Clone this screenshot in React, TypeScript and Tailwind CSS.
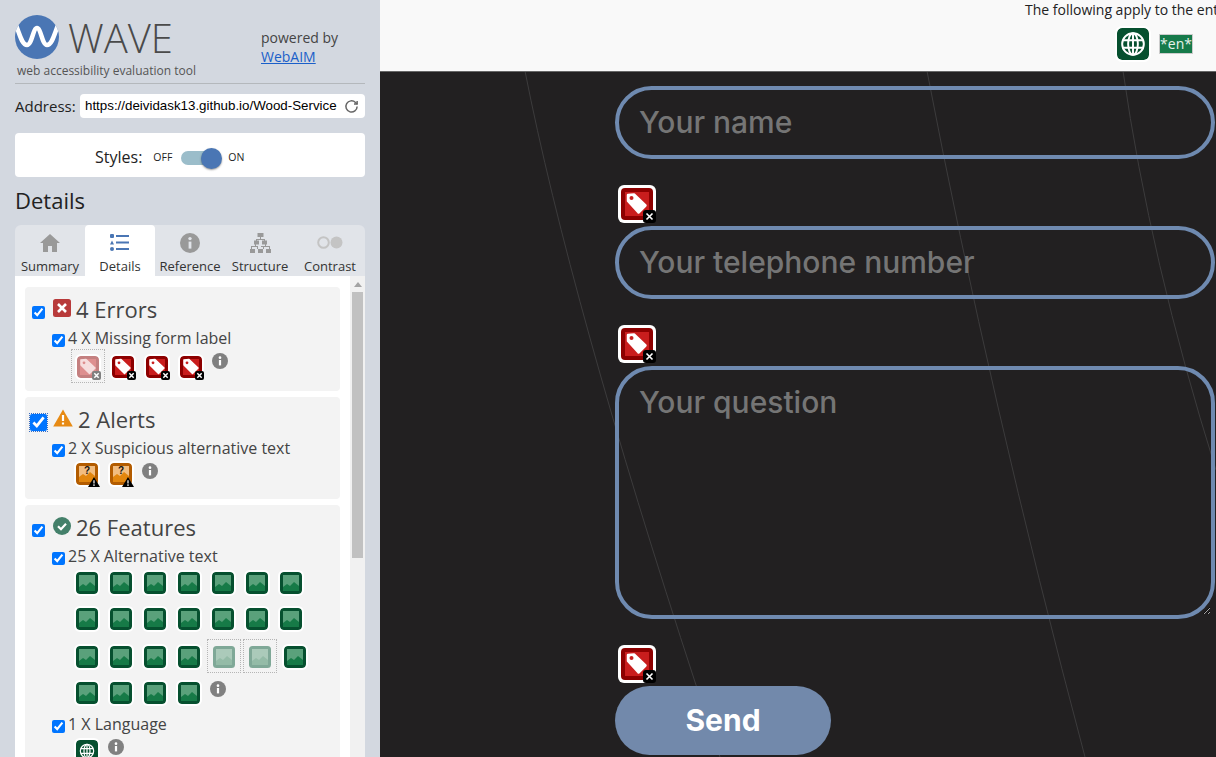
import React from "react";

const Badge = ({ faded }: { faded?: boolean }) => (
  <span className={`absolute flex items-center justify-center rounded-[2px] ${faded ? "bg-[#808080]" : "bg-black"}`} style={{ right: "-2px", bottom: "-2px", width: "9px", height: "9px" }}>
    <svg width="7" height="7" viewBox="0 0 8 8"><path d="M1.5 1.5l5 5M6.5 1.5l-5 5" stroke="#fff" strokeWidth="1.7" /></svg>
  </span>
);

const TagIcon = ({ big, faded }: { big?: boolean; faded?: boolean }) => {
  if (big) {
    return (
      <span className="relative block w-[38px] h-[38px] shrink-0 rounded-[6px] bg-white p-[3px]">
        <svg width="32" height="32" viewBox="0 0 32 32" className="block">
          <rect width="32" height="32" rx="4" fill="#8d0000" />
          <rect x="4" y="4" width="24" height="24" fill="#c91d1d" />
          <path d="M7 7 L13 6.5 L24.5 17.5 L17.5 24.5 L7 13 Z" fill="#fff" strokeLinejoin="round" stroke="#fff" strokeWidth="2.5" />
          <circle cx="10.5" cy="10" r="2" fill="#c91d1d" />
        </svg>
        <span className="absolute right-0 bottom-0 w-[13px] h-[13px] bg-black rounded-[3px] flex items-center justify-center">
          <svg width="9" height="9" viewBox="0 0 9 9"><path d="M1.5 1.5l6 6M7.5 1.5l-6 6" stroke="#fff" strokeWidth="1.6" /></svg>
        </span>
      </span>
    );
  }
  return (
    <span className="relative block w-[22px] h-[22px] shrink-0 rounded-[4px] outline-2 outline-white">
      <svg width="22" height="22" viewBox="0 0 22 22" className="block">
        <rect width="22" height="22" rx="3.5" fill={faded ? "#c48080" : "#8d0000"} />
        <rect x="3" y="3" width="16" height="16" fill={faded ? "#de8f8f" : "#c91d1d"} />
        <path d="M4 4 L9 3.5 L18 12 L12.5 17.5 L4 9 Z" fill={faded ? "#f6dede" : "#fff"} stroke={faded ? "#f6dede" : "#fff"} strokeWidth="1.5" strokeLinejoin="round" />
        <circle cx="7" cy="6.8" r="1.4" fill={faded ? "#de8f8f" : "#c91d1d"} />
      </svg>
      <Badge faded={faded} />
    </span>
  );
};

const QIcon = () => (
  <span className="relative block w-[22px] h-[22px] mx-[6px] shrink-0 rounded-[4px] outline-2 outline-white">
    <svg width="22" height="22" viewBox="0 0 22 22" className="block">
      <rect width="22" height="22" rx="3.5" fill="#b35c00" />
      <rect x="3" y="3" width="16" height="16" fill="#f2bd80" />
      <path d="M3 19 V14 L7 11 L10 13 L14 9 L19 13 V19 Z" fill="#e2860e" />
      <text x="11" y="11" textAnchor="middle" fontSize="10" fontWeight="700" fontFamily="Liberation Sans" fill="#111">?</text>
    </svg>
    <svg width="12" height="10" viewBox="0 0 12 10" className="absolute" style={{ right: "-2px", bottom: "-2px" }}>
      <path d="M6 0 L12 10 H0 Z" fill="#000" />
      <path d="M6 3.2v3.4M6 7.3v1.6" stroke="#fff" strokeWidth="1.2" />
    </svg>
  </span>
);

const ImgIcon = ({ faded }: { faded?: boolean }) => (
  <span className={`block w-[22px] h-[22px] shrink-0 rounded-[4px] ${faded ? "" : "outline-2 outline-white"}`}>
    <svg width="22" height="22" viewBox="0 0 22 22" className="block">
      <rect width="22" height="22" rx="3.5" fill={faded ? "#7fa897" : "#06502f"} />
      <rect x="3" y="3" width="16" height="16" fill={faded ? "#abcaba" : "#5aa17b"} />
      <path d="M3 19 V15 L7 12 L10 14 L14 10 L19 14 V19 Z" fill={faded ? "#94bba7" : "#167a47"} />
    </svg>
  </span>
);

const Globe = ({ size, color }: { size: number; color: string }) => (
  <svg width={size} height={size} viewBox="0 0 24 24" fill="none" stroke={color} strokeWidth="1.8" className="block">
    <circle cx="12" cy="12" r="10" />
    <ellipse cx="12" cy="12" rx="4.5" ry="10" />
    <path d="M12 2v20M2.8 8.5h18.4M2.8 15.5h18.4" />
  </svg>
);

const Info = ({ cls }: { cls: string }) => (
  <svg width="16" height="16" viewBox="0 0 16 16" className={`block shrink-0 ${cls}`}>
    <circle cx="8" cy="8" r="8" fill="#808080" />
    <rect x="6.9" y="7" width="2.2" height="5.4" fill="#fff" />
    <circle cx="8" cy="4.7" r="1.35" fill="#fff" />
  </svg>
);

const Tab = ({ label, active, children }: { label: string; active?: boolean; children: React.ReactNode }) => (
  <div className={`w-[70px] h-[51px] flex flex-col items-center ${active ? "bg-white rounded-t-[4px]" : ""}`}>
    <div className="h-[34px] flex items-center justify-center pt-[1px] w-full">{children}</div>
    <div className="text-[13px] leading-[14px] text-[#333] whitespace-nowrap">{label}</div>
  </div>
);

const Check = ({ cls }: { cls: string }) => <input type="checkbox" defaultChecked className={`block shrink-0 m-0 ${cls}`} />;

const Field = ({ placeholder }: { placeholder: string }) => (
  <input
    placeholder={placeholder}
    className="block w-[600px] h-[73px] shrink-0 rounded-[37px] border-4 border-[#6f8ab0] bg-transparent pl-[20px] pr-5 pb-[2px] text-[30px] font-medium outline-none placeholder:text-[#757575]"
  />
);

const Row = ({ children, cls }: { children: React.ReactNode; cls: string }) => <div className={`flex items-start ml-[45px] ${cls}`}>{children}</div>;

const Cell = ({ children }: { children: React.ReactNode }) => <span className="block mx-[6px]">{children}</span>;

const Dotted = ({ children }: { children: React.ReactNode }) => (
  <span className="block w-[34px] h-[34px] pt-[6px] px-[5px] border border-dotted border-[#b5b5b5] mr-[2px] shrink-0">{children}</span>
);

const imgs = (n: number) => Array.from({ length: n }, (_, i) => <Cell key={i}><ImgIcon /></Cell>);

const SmallImg = () => <span className="block mx-[6px] mt-[7px]"><ImgIcon /></span>;

export default function App() {
  return (
    <div className="flex w-[1216px] h-[757px] overflow-hidden bg-[#222021] text-[#333]" style={{ fontFamily: '"Open Sans", sans-serif' }}>
      <aside className="w-[380px] h-[757px] shrink-0 bg-[#d3d8e0] px-[15px] pt-[15px] overflow-hidden">
        <div className="flex items-start h-[69px] border-b border-[#b4b8bc]">
          <div className="w-[246px] shrink-0">
            <div className="flex items-center h-[44px]">
              <svg width="44" height="44" viewBox="0 0 44 44" className="block shrink-0">
                <defs><clipPath id="c"><circle cx="22" cy="22" r="22" /></clipPath></defs>
                <circle cx="22" cy="22" r="22" fill="#4a76b4" />
                <path clipPath="url(#c)" d="M1 10 C5 20 7 30 12 30 C17 30 18 13 22 13 C26 13 27 30 32 30 C37 30 39 20 43 10" fill="none" stroke="#fff" strokeWidth="4.5" />
              </svg>
              <span className="ml-[9px] mt-[2px] text-[40px] leading-[44px] font-light text-[#4a4a4a]">WAVE</span>
            </div>
            <div className="ml-[2px] mt-[4px] text-[12px] leading-[16px] text-[#555] whitespace-nowrap">web accessibility evaluation tool</div>
          </div>
          <div className="pt-[13px] text-[14px] leading-[19px] text-[#444]">
            <div>powered by</div>
            <a className="underline text-[#1a5fc9]">WebAIM</a>
          </div>
        </div>

        <div className="flex items-center mt-[10px] h-[24px]">
          <span className="w-[65px] shrink-0 text-[15px] text-[#222]">Address:</span>
          <div className="flex items-center justify-between w-[285px] h-[24px] bg-white rounded-[4px] pl-[5px] pr-[6px]">
            <span className="text-[13.33px] text-black whitespace-nowrap" style={{ fontFamily: '"Liberation Sans", sans-serif' }}>https://deividask13.github.io/Wood-Service</span>
            <svg width="15" height="15" viewBox="0 0 24 24" fill="none" stroke="#666" strokeWidth="2.4" className="block shrink-0">
              <path d="M21 12a9 9 0 1 1-2.6-6.4L21 8" />
              <path d="M21 3v5h-5" />
            </svg>
          </div>
        </div>

        <div className="flex items-center mt-[15px] h-[44px] bg-white rounded-[4px] pl-[80px] pt-[4px]">
          <span className="text-[16px] text-[#222]">Styles:</span>
          <span className="ml-[11px] mt-[2px] text-[10.5px] text-[#222]">OFF</span>
          <span className="relative block ml-[9px] mt-[2px] w-[32px] h-[14px] rounded-[7px] bg-[#9bbdca]">
            <span className="absolute block right-[-9px] top-[-3px] w-[21px] h-[21px] rounded-full bg-[#4a76b4] shadow-[0_1px_2px_rgba(0,0,0,0.4)]" />
          </span>
          <span className="ml-[15px] mt-[2px] text-[10.5px] text-[#222]">ON</span>
        </div>

        <h2 className="mt-[8px] text-[22px] leading-[30px] text-[#222]">Details</h2>

        <div className="flex mt-[10px] bg-[#e1e4e9] rounded-t-[6px] w-[350px]">
          <Tab label="Summary">
            <svg width="20" height="18" viewBox="0 0 20 18"><path d="M10 0 L20 9 H17 V18 H12 V12 H8 V18 H3 V9 H0 Z" fill="#999" /></svg>
          </Tab>
          <Tab label="Details" active>
            <svg width="20" height="17" viewBox="0 0 20 17" fill="#4a76b4">
              <rect x="0" y="0" width="4" height="4" rx="1" /><rect x="6" y="1" width="13" height="2" />
              <path d="M2 6.5 L4 10.5 H0 Z" /><rect x="6" y="7.5" width="13" height="2" />
              <circle cx="2" cy="15" r="2" /><rect x="6" y="14" width="13" height="2" />
            </svg>
          </Tab>
          <Tab label="Reference">
            <svg width="20" height="20" viewBox="0 0 20 20"><circle cx="10" cy="10" r="10" fill="#999" /><rect x="8.6" y="8.6" width="2.8" height="7" fill="#e1e4e9" /><circle cx="10" cy="5.6" r="1.7" fill="#e1e4e9" /></svg>
          </Tab>
          <Tab label="Structure">
            <svg width="21" height="20" viewBox="0 0 21 20" fill="#999" stroke="none">
              <rect x="7.5" y="0" width="6" height="4" /><rect x="4" y="7.5" width="5" height="4" /><rect x="12" y="7.5" width="5" height="4" />
              <rect x="0" y="16" width="5" height="4" /><rect x="8" y="16" width="5" height="4" /><rect x="16" y="16" width="5" height="4" />
              <path d="M10 4v2h-4v2h1v-1h7v1h1V6h-4V4z M2 14h5v2h1v-3H6v-2H5v2H1v3h1z M11 13h4v-2h1v2h4v3h-1v-2h-5v2h-1v-2h-2z" />
            </svg>
          </Tab>
          <Tab label="Contrast">
            <svg width="26" height="13" viewBox="0 0 26 13"><circle cx="6.5" cy="6.5" r="5.3" fill="none" stroke="#c4c4c4" strokeWidth="2" /><circle cx="19.5" cy="6.5" r="6" fill="#c4c4c4" /></svg>
          </Tab>
        </div>

        <div className="flex w-[350px] h-[500px] bg-white">
          <div className="w-[335px] shrink-0 pl-[10px] pr-[10px] pt-[11px]">
            <section className="relative h-[104px] w-[315px] bg-[#f3f3f3] rounded-[4px] pt-[13px]">
              <div className="flex items-start">
                <Check cls="ml-[7px] mt-[6px] w-[13px] h-[13px]" />
                <svg width="18" height="18" viewBox="0 0 18 18" className="block ml-[8px] mt-[-1px] shrink-0"><rect width="18" height="18" rx="2.5" fill="#b83a3a" /><path d="M5 5l8 8M13 5l-8 8" stroke="#fff" strokeWidth="2.6" /></svg>
                <span className="ml-[5px] text-[22px] leading-[20px] text-[#444] whitespace-nowrap mt-[-1px]">4 Errors</span>
              </div>
              <div className="flex items-start mt-[9px] h-[20px]">
                <Check cls="ml-[27px] mt-[6px] w-[13px] h-[13px]" />
                <span className="ml-[3px] text-[16px] leading-[20px] text-[#444] whitespace-nowrap">4 X Missing form label</span>
              </div>
              <div className="flex items-start ml-[46px] mt-[1px]">
                <span className="block w-[34px] h-[34px] pt-[6px] pl-[5px] pr-[5px] border border-dotted border-[#b5b5b5] shrink-0"><TagIcon faded /></span>
                <span className="block ml-[7px] mt-[7px]"><TagIcon /></span>
                <span className="block ml-[12px] mt-[7px]"><TagIcon /></span>
                <span className="block ml-[12px] mt-[7px]"><TagIcon /></span>
                <Info cls="ml-[10px] mt-[4px]" />
              </div>
            </section>

            <section className="relative mt-[6px] h-[102px] w-[315px] bg-[#f3f3f3] rounded-[4px] pt-[13px]">
              <div className="flex items-start">
                <Check cls="ml-[5px] mt-[4px] w-[17px] h-[17px] outline-1 outline-dotted outline-[#3d6fc0]" />
                <svg width="20" height="18" viewBox="0 0 20 18" className="block ml-[6px] mt-[-1px] shrink-0"><path d="M10 0.5 L19.8 17.5 H0.2 Z" fill="#e78a14" /><path d="M10 6v6M10 13.4v2.2" stroke="#fff" strokeWidth="2.2" /></svg>
                <span className="ml-[5px] text-[22px] leading-[20px] text-[#444] whitespace-nowrap mt-[-1px]">2 Alerts</span>
              </div>
              <div className="flex items-start mt-[7px] h-[20px]">
                <Check cls="ml-[27px] mt-[6px] w-[13px] h-[13px]" />
                <span className="ml-[3px] text-[16px] leading-[20px] text-[#444] whitespace-nowrap">2 X Suspicious alternative text</span>
              </div>
              <div className="flex items-start ml-[45px] mt-[5px]">
                <QIcon />
                <QIcon />
                <Info cls="ml-[4px]" />
              </div>
            </section>

            <section className="relative mt-[6px] h-[300px] w-[315px] bg-[#f3f3f3] rounded-[4px] pt-[13px]">
              <div className="flex items-start">
                <Check cls="ml-[7px] mt-[6px] w-[13px] h-[13px]" />
                <svg width="18" height="18" viewBox="0 0 18 18" className="block ml-[8px] mt-[-1px] shrink-0"><circle cx="9" cy="9" r="9" fill="#44806a" /><path d="M5 9.2l3 3 5-5.4" fill="none" stroke="#fff" strokeWidth="2.2" /></svg>
                <span className="ml-[5px] text-[22px] leading-[20px] text-[#444] whitespace-nowrap mt-[-1px]">26 Features</span>
              </div>
              <div className="flex items-start mt-[9px] h-[20px]">
                <Check cls="ml-[27px] mt-[6px] w-[13px] h-[13px]" />
                <span className="ml-[3px] text-[16px] leading-[20px] text-[#444] whitespace-nowrap">25 X Alternative text</span>
              </div>
              <Row cls="mt-[6px] h-[36px]">{imgs(7)}</Row>
              <Row cls="h-[31px]">{imgs(7)}</Row>
              <Row cls="h-[43px]">
                <SmallImg /><SmallImg /><SmallImg /><SmallImg />
                <span className="block w-[1px] shrink-0" />
                <Dotted><ImgIcon faded /></Dotted>
                <Dotted><ImgIcon faded /></Dotted>
                <span className="block ml-[5px] mt-[7px]"><ImgIcon /></span>
              </Row>
              <Row cls="h-[32px]">
                {imgs(4)}
                <Info cls="ml-[4px] mt-[-1px]" />
              </Row>
              <div className="flex items-start h-[20px]">
                <Check cls="ml-[27px] mt-[6px] w-[13px] h-[13px]" />
                <span className="ml-[3px] text-[16px] leading-[20px] text-[#444] whitespace-nowrap">1 X Language</span>
              </div>
              <div className="flex items-start ml-[51px] mt-[6px]">
                <span className="block w-[22px] h-[22px] bg-[#06502f] rounded-[4px] p-[3px] outline-2 outline-white shrink-0"><Globe size={16} color="#fff" /></span>
                <Info cls="ml-[10px] mt-[-1px]" />
              </div>
            </section>
          </div>
          <div className="w-[15px] shrink-0 bg-[#f1f1f1] pt-[6px] px-[2px]">
            <div className="mx-auto w-0 h-0 border-x-4 border-x-transparent border-b-[5px] border-b-[#a3a3a3]" />
            <div className="mt-[5px] w-[11px] h-[266px] bg-[#c1c1c1]" />
          </div>
        </div>
      </aside>

      <main className="relative w-[836px] h-[757px] shrink-0 overflow-hidden">
        <svg width="836" height="757" viewBox="0 0 836 757" fill="none" stroke="#3c3b3c" strokeWidth="1" className="absolute left-0 top-0">
          <path d="M145 71 Q190 300 316 685 L340 757" />
          <path d="M547 71 Q610 400 705 757" />
          <path d="M743 71 Q770 260 836 470" />
        </svg>
        <header className="relative h-[72px] bg-[#f9f9f9] border-b border-[#666] overflow-hidden">
          <div className="ml-[645px] text-[14px] leading-[20px] text-[#222] whitespace-nowrap">The following apply to the entire page</div>
          <div className="flex items-center ml-[737px] mt-[8px]">
            <span className="block w-[32px] h-[32px] rounded-[5px] bg-[#06502f] p-[3px] outline-2 outline-white shrink-0"><Globe size={26} color="#fff" /></span>
            <span className="block ml-[10px] w-[34px] h-[20px] bg-[#167a4a] border border-[#ccc] text-[14px] leading-[17px] text-[#e8f2ec] text-center whitespace-nowrap">*en*</span>
          </div>
        </header>
        <div className="relative flex flex-col items-start pl-[235px] pt-[14px]" style={{ fontFamily: "Inter, sans-serif" }}>
          <Field placeholder="Your name" />
          <div className="ml-[3px] mt-[26px] mb-[3px]"><TagIcon big /></div>
          <Field placeholder="Your telephone number" />
          <div className="ml-[3px] mt-[26px] mb-[3px]"><TagIcon big /></div>
          <textarea
            placeholder="Your question"
            className="block w-[600px] h-[253px] shrink-0 rounded-[37px] border-4 border-[#6f8ab0] bg-transparent pl-[20px] pr-5 pt-[10px] text-[30px] font-medium outline-none placeholder:text-[#757575]"
          />
          <div className="ml-[3px] mt-[26px] mb-[3px]"><TagIcon big /></div>
          <button className="w-[216px] h-[69px] rounded-[35px] bg-[#7289ab] text-white text-[30px] font-bold">Send</button>
        </div>
      </main>
    </div>
  );
}
